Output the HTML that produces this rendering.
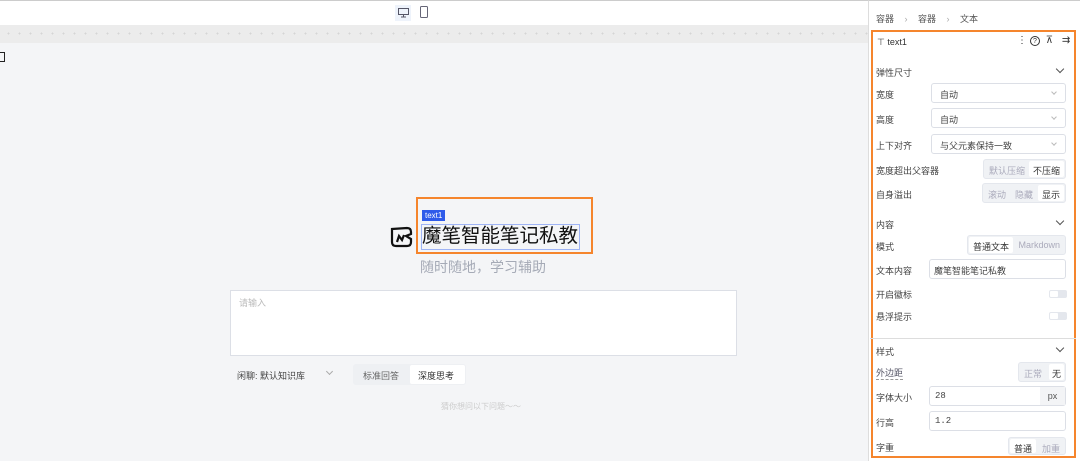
<!DOCTYPE html>
<html><head><meta charset="utf-8"><style>
*{box-sizing:border-box;margin:0;padding:0}
body{width:1080px;height:461px;overflow:hidden;background:#f4f5f7;font-family:"Liberation Sans","Noto Sans CJK SC",sans-serif;position:relative;color:#333}
.a{position:absolute;white-space:nowrap}
.top{left:0;top:0;width:868px;height:25px;background:#fff;border-top:1px solid #ccc}
.dots{left:0;top:25px;width:868px;height:18px;background:#ececec;background-image:radial-gradient(#d5d5d5 0.8px,transparent 1px);background-size:11px 11px;background-position:3px 3px}
.panel{left:868px;top:0;width:212px;height:461px;background:#fff;border-left:1px solid #ddd;border-top:1px solid #ccc}
.ob{left:871px;top:30px;width:205px;height:428px;border:2px solid #f5852d}
.lb{font-size:9px;color:#444}
.sel,.inp{height:20px;border:1px solid #dcdfe6;border-radius:3px;background:#fff;font-size:9px;color:#444;padding:4px 8px}
.sel:after{content:"";position:absolute;right:9px;top:6px;width:3px;height:3px;border-right:1px solid #bbb;border-bottom:1px solid #bbb;transform:rotate(45deg)}
.seg{height:20px;background:#f0f2f5;border:1px solid #e4e7ed;border-radius:3px;display:flex;font-size:9px;padding:1px;justify-content:space-between}
.seg span{padding:3px 4px;color:#aab;white-space:nowrap}
.seg span.on{background:#fff;color:#333;border-radius:2px}
.tg{width:18px;height:8px;background:#e4e7ed;border-radius:2px}
.tg:after{content:"";position:absolute;left:1px;top:1px;width:8px;height:6px;background:#fff;border-radius:1px}
.chev{width:6px;height:6px;border-right:1.2px solid #555;border-bottom:1.2px solid #555;transform:rotate(45deg)}
</style></head><body>
<div class="a top"></div>
<div class="a" style="left:395px;top:5px;width:16px;height:16px;background:#eef3fb"></div>
<svg class="a" style="left:398px;top:8px" width="11" height="10"><rect x="0.5" y="0.5" width="10" height="6" fill="none" stroke="#556" /><path d="M3 9h5M5.5 7v2" stroke="#556"/></svg>
<svg class="a" style="left:420px;top:6px" width="8" height="13"><rect x="0.5" y="0.5" width="7" height="11" rx="1" fill="none" stroke="#667"/></svg>
<div class="a dots"></div>
<div class="a" style="left:0;top:52px;width:5px;height:10px;border:1px solid #222;border-left:none"></div>

<div class="a" style="left:416px;top:197px;width:177px;height:57px;border:2px solid #f5852d"></div>
<div class="a" style="left:422px;top:210px;background:#2f5bea;color:#fff;font-size:8px;padding:0 3px;height:11px;line-height:11px">text1</div>
<div class="a" style="left:421px;top:224px;width:159px;height:26px;border:1px solid #9fb4f5"></div>
<div class="a" style="left:422px;top:224px;font-size:19.5px;line-height:24px;color:#111">魔笔智能笔记私教</div>
<svg class="a" style="left:389px;top:225px" width="26" height="23" viewBox="0 0 26 23"><path d="M3 4 L18 3 Q22 3 22 7 L22 9 L17 11 L22 14 L22 17 Q22 21 18 21 L7 21 Q3 21 3 17 Z" fill="none" stroke="#111" stroke-width="2.2"/><path d="M8 17 L10 11 L13 15 L15 10" fill="none" stroke="#111" stroke-width="2.2"/></svg>
<div class="a" style="left:420px;top:257px;font-size:14px;color:#a5aab6">随时随地，学习辅助</div>
<div class="a" style="left:230px;top:290px;width:507px;height:66px;background:#fff;border:1px solid #dcdfe6"></div>
<div class="a" style="left:239px;top:296px;font-size:9px;color:#bbb">请输入</div>
<div class="a" style="left:237px;top:369px;font-size:9px;color:#444">闲聊: 默认知识库</div>
<div class="a" style="left:327px;top:369px;width:5px;height:5px;border-right:1px solid #aaa;border-bottom:1px solid #aaa;transform:rotate(45deg)"></div>
<div class="a" style="left:353px;top:364px;width:113px;height:21px;background:#eef0f3;border-radius:3px"></div>
<div class="a" style="left:363px;top:369px;font-size:9px;color:#666">标准回答</div>
<div class="a" style="left:410px;top:365px;width:55px;height:19px;background:#fff;border-radius:2px;font-size:9px;padding:4px 0 0 8px">深度思考</div>
<div class="a" style="left:441px;top:401px;font-size:8px;color:#ccc">猜你想问以下问题～～</div>

<div class="a panel"></div>
<div class="a" style="left:876px;top:12px;font-size:9px;color:#555;word-spacing:8px">容器 <span style="color:#aaa">›</span> 容器 <span style="color:#aaa">›</span> 文本</div>
<div class="a ob"></div>
<div class="a" style="left:877px;top:37px;font-size:9px;color:#333">⊤ text1</div>
<div class="a" style="left:1017px;top:35px;font-size:10px;color:#333;letter-spacing:3px">⋮<span style="display:inline-block;width:10px;height:10px;border:1px solid #333;border-radius:50%;font-size:7px;text-align:center;line-height:9px;letter-spacing:0">?</span> ⊼ ⇉</div>
<div class="a lb" style="left:876px;top:66px">弹性尺寸</div><div class="a chev" style="left:1057px;top:66px"></div>
<div class="a lb" style="left:876px;top:88px">宽度</div><div class="a sel" style="left:931px;top:83px;width:135px">自动</div>
<div class="a lb" style="left:876px;top:113px">高度</div><div class="a sel" style="left:931px;top:108px;width:135px">自动</div>
<div class="a lb" style="left:876px;top:139px">上下对齐</div><div class="a sel" style="left:931px;top:134px;width:135px">与父元素保持一致</div>
<div class="a lb" style="left:876px;top:164px">宽度超出父容器</div><div class="a seg" style="left:983px;top:159px;width:83px"><span>默认压缩</span><span class="on">不压缩</span></div>
<div class="a lb" style="left:876px;top:188px">自身溢出</div><div class="a seg" style="left:982px;top:183px;width:84px"><span>滚动</span><span>隐藏</span><span class="on">显示</span></div>
<div class="a lb" style="left:876px;top:218px">内容</div><div class="a chev" style="left:1057px;top:218px"></div>
<div class="a lb" style="left:876px;top:240px">模式</div><div class="a seg" style="left:967px;top:235px;width:99px"><span class="on">普通文本</span><span>Markdown</span></div>
<div class="a lb" style="left:876px;top:264px">文本内容</div><div class="a inp" style="left:929px;top:259px;width:137px;padding:4px 4px">魔笔智能笔记私教</div>
<div class="a lb" style="left:876px;top:288px">开启徽标</div><div class="a tg" style="left:1049px;top:290px"></div>
<div class="a lb" style="left:876px;top:310px">悬浮提示</div><div class="a tg" style="left:1049px;top:312px"></div>
<div class="a" style="left:870px;top:338px;width:206px;border-top:1px solid #ddd"></div>
<div class="a lb" style="left:876px;top:345px">样式</div><div class="a chev" style="left:1057px;top:345px"></div>
<div class="a lb" style="left:876px;top:366px;border-bottom:1px dashed #999;color:#556">外边距</div><div class="a seg" style="left:1018px;top:362px;width:48px"><span>正常</span><span class="on" style="padding:3px 3px">无</span></div>
<div class="a lb" style="left:876px;top:391px">字体大小</div><div class="a inp" style="left:929px;top:386px;width:137px;padding:4px 5px;font-family:'Liberation Mono',monospace">28</div>
<div class="a" style="left:1040px;top:387px;width:25px;height:18px;background:#f3f4f6;font-size:9px;color:#555;text-align:center;line-height:18px">px</div>
<div class="a lb" style="left:876px;top:416px">行高</div><div class="a inp" style="left:929px;top:411px;width:137px;padding:4px 5px;font-family:'Liberation Mono',monospace">1.2</div>
<div class="a lb" style="left:876px;top:441px">字重</div><div class="a seg" style="left:1008px;top:437px;height:18px;width:58px"><span class="on">普通</span><span>加重</span></div>
</body></html>
